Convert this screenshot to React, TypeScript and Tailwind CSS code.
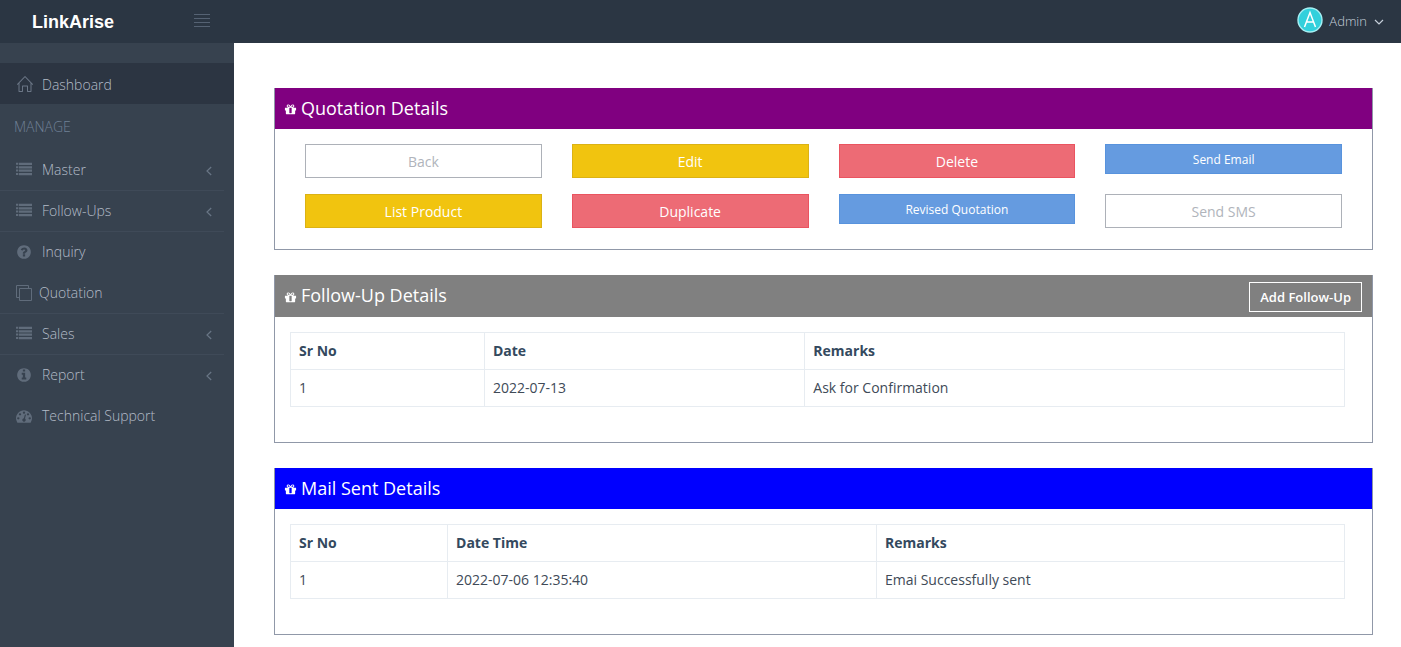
import type { ReactNode } from "react";
import { SlHome } from "react-icons/sl";

const DISC =
  "q0 209-103 385.5t-279.5 279.5-385.5 103-385.5-103-279.5-279.5-103-385.5 103-385.5 279.5-279.5 385.5-103 385.5 103 279.5 279.5 103 385.5z";
const DOT =
  "q0-53-37.5-90.5t-90.5-37.5-90.5 37.5-37.5 90.5 37.5 90.5 90.5 37.5 90.5-37.5 37.5-90.5z";

const PATHS = {
  gift: "M1056 1356v-716h-320v716q0 25 18 38.5t46 13.5h192q28 0 46-13.5t18-38.5zm-456-844h195l-126-161q-26-31-69-31-40 0-68 28t-28 68 28 68 68 28zm688-96q0-40-28-68t-68-28q-43 0-69 31l-125 161h194q40 0 68-28t28-68zm376 256v320q0 14-9 23t-23 9h-96v416q0 40-28 68t-68 28h-1088q-40 0-68-28t-28-68v-416h-96q-14 0-23-9t-9-23v-320q0-14 9-23t23-9h440q-93 0-158.5-65.5t-65.5-158.5 65.5-158.5 158.5-65.5q107 0 168 77l128 165 128-165q61-77 168-77 93 0 158.5 65.5t65.5 158.5-65.5 158.5-158.5 65.5h440q14 0 23 9t9 23z",
  list: "M0 1232h256v224H0zM0 848h256v224H0zM0 464h256v224H0zM0 80h256v224H0zM336 1232h1456v256H336zM336 848h1456v256H336zM336 464h1456v256H336zM336 80h1456v256H336z",
  question:
    "M1024 1376v-192q0-14-9-23t-23-9h-192q-14 0-23 9t-9 23v192q0 14 9 23t23 9h192q14 0 23-9t9-23zm256-672q0-88-55.5-163t-138.5-116-170-41q-243 0-371 213-15 24 8 42l132 100q7 6 19 6 16 0 25-12 53-68 86-92 34-24 86-24 48 0 85.5 26t37.5 59q0 38-20 61t-68 45q-63 28-115.5 86.5t-52.5 125.5v36q0 14 9 23t23 9h192q14 0 23-9t9-23q0-19 21.5-49.5t54.5-49.5q32-18 49-28.5t46-35 44.5-48 28-60.5 12.5-81zm384 192" +
    DISC,
  info:
    "M1152 1376v-160q0-14-9-23t-23-9h-96v-512q0-14-9-23t-23-9h-320q-14 0-23 9t-9 23v160q0 14 9 23t23 9h96v320h-96q-14 0-23 9t-9 23v160q0 14 9 23t23 9h448q14 0 23-9t9-23zm-128-896v-160q0-14-9-23t-23-9h-192q-14 0-23 9t-9 23v160q0 14 9 23t23 9h192q14 0 23-9t9-23zm640 416" +
    DISC,
  gauge:
    "M384 1152" + DOT + "m192-448" + DOT +
    "m428 481l101-382q6-26-7.5-48.5t-38.5-29.5-48 6.5-30 39.5l-101 382q-60 5-107 43.5t-63 98.5q-20 77 20 146t117 89 146-20 89-117q16-60-6-117t-72-91zm660-33" +
    DOT + "m-640-640" + DOT + "m448 192" + DOT +
    "m320 448q0 261-141 483-19 29-54 29h-1402q-35 0-54-29-141-221-141-483 0-182 71-348t191-286 286-191 348-71 348 71 286 191 191 286 71 348z",
};

function Glyph({ name, className }: { name: keyof typeof PATHS; className: string }) {
  return (
    <svg viewBox="0 0 1792 1792" fill="currentColor" aria-hidden="true" className={className}>
      <path d={PATHS[name]} />
    </svg>
  );
}

function Layers() {
  return (
    <svg viewBox="0 0 16 16" fill="none" stroke="currentColor" aria-hidden="true" className="size-4 shrink-0">
      <path d="M3.5 3.5h12v12h-12zM3 12.5H.5V.5h12V3" />
    </svg>
  );
}

type Item = { label: string; icon: ReactNode; sub?: boolean; line?: boolean; tight?: boolean };

const listIcon = <Glyph name="list" className="size-4 shrink-0" />;

const items: Item[] = [
  { label: "Master", icon: listIcon, sub: true, line: true },
  { label: "Follow-Ups", icon: listIcon, sub: true, line: true },
  { label: "Inquiry", icon: <Glyph name="question" className="size-4 shrink-0" /> },
  { label: "Quotation", icon: <Layers />, line: true, tight: true },
  { label: "Sales", icon: listIcon, sub: true, line: true },
  { label: "Report", icon: <Glyph name="info" className="size-4 shrink-0" />, sub: true },
  { label: "Technical Support", icon: <Glyph name="gauge" className="size-4 shrink-0" /> },
];

function Sidebar() {
  return (
    <nav className="w-[234px] shrink-0 bg-[#37424f] pt-5 text-sm font-light text-[#b4bcc8]">
      <a href="#dashboard" className="flex h-[41px] items-center gap-[9px] bg-[#2c3542] pt-[2px] pl-[17px]">
        <SlHome className="mb-px size-4 shrink-0 text-[#6b7686]" />
        Dashboard
      </a>
      <h3 className="flex h-[46px] items-center pl-[14px] text-[#708096]">MANAGE</h3>
      <ul>
        {items.map((item) => (
          <li key={item.label} className="pr-[10px]">
            <a
              href="#menu"
              className={
                "flex h-[41px] items-center border-b pl-4 " +
                (item.line ? "border-[#3f4a58] " : "border-transparent ") +
                (item.tight ? "gap-[7px]" : "gap-[10px]")
              }
            >
              <span className="pb-px text-[#606c7b]">{item.icon}</span>
              {item.label}
              {item.sub && (
                <svg viewBox="0 0 6 10" fill="none" stroke="currentColor" aria-hidden="true" className="mt-px mr-3 ml-auto h-[10px] w-[6px] text-[#697686]">
                  <path d="M5.2 1 1 5l4.2 4" strokeWidth="1.2" />
                </svg>
              )}
            </a>
          </li>
        ))}
      </ul>
    </nav>
  );
}

function Panel({ title, head, action, children }: { title: string; head: string; action?: ReactNode; children: ReactNode }) {
  return (
    <section className="mb-[25px] border border-t-0 border-[#9098a8]">
      <header className={"flex min-h-[41px] items-center pr-[10px] pl-[9px] text-white " + head}>
        <div className="flex items-center pb-[2px]">
          <Glyph name="gift" className="mt-1 mr-1 size-[13px]" />
          <h2 className="text-lg leading-6">{title}</h2>
        </div>
        {action}
      </header>
      {children}
    </section>
  );
}

function DataTable({ head, row, cols }: { head: string[]; row: string[]; cols: string[] }) {
  return (
    <div className="pt-[15px] pr-[27px] pb-[35px] pl-[15px]">
      <table className="w-full table-fixed border-collapse text-left text-sm leading-5 text-[#34495e]">
        <thead>
          <tr>
            {head.map((h, i) => (
              <th key={h} className={"border border-[#e7ecf1] p-2 font-bold " + cols[i]}>{h}</th>
            ))}
          </tr>
        </thead>
        <tbody>
          <tr>
            {row.map((c) => (
              <td key={c} className="border border-[#e7ecf1] p-2 text-[#404a57]">{c}</td>
            ))}
          </tr>
        </tbody>
      </table>
    </div>
  );
}

const plain = "h-[34px] border-[#adb1b8] bg-white text-sm text-[#b0b4bb]";
const yellow = "h-[34px] border-[#dbb215] bg-[#f1c40f] text-sm text-white";
const red = "h-[34px] border-[#ea5460] bg-[#ed6b75] text-sm text-white";
const blue = "h-[30px] border-[#5893dd] bg-[#659be0] text-xs text-white";

const actions = [
  ["Back", plain],
  ["Edit", yellow],
  ["Delete", red],
  ["Send Email", blue],
  ["List Product", yellow],
  ["Duplicate", red],
  ["Revised Quotation", blue],
  ["Send SMS", plain],
];

export default function App() {
  return (
    <div className="flex min-h-screen flex-col bg-white font-['Open_Sans',sans-serif]">
      <header className="flex h-[43px] items-center bg-[#2b3643]">
        <div className="flex w-[234px] items-center justify-between pr-6 pl-8">
          <a href="#home" className="pt-px font-['Liberation_Sans',sans-serif] text-lg leading-6 font-bold text-white">LinkArise</a>
          <button type="button" aria-label="Toggle menu" className="pb-[2px] text-[#556273]">
            <svg viewBox="0 0 16 13" stroke="currentColor" aria-hidden="true" className="h-[13px] w-4">
              <path d="M0 .5h16M0 4.5h16M0 8.5h16M0 12.5h16" />
            </svg>
          </button>
        </div>
        <button type="button" className="mr-[17px] ml-auto flex items-center pt-px text-[13px] font-light text-[#c6cfda]">
          <svg viewBox="0 0 26 26" aria-hidden="true" className="mr-[6px] mb-[5px] size-[26px]">
            <circle cx="13" cy="13" r="12" fill="#32d0dc" stroke="#a5eff3" strokeWidth="1.4" />
            <path d="M7.5 20 13 5.5 18.5 20M9.5 15h7" fill="none" stroke="#fff" strokeWidth="1.5" />
          </svg>
          Admin
          <svg viewBox="0 0 10 6" fill="none" stroke="currentColor" aria-hidden="true" className="ml-[7px] h-[6px] w-[10px]">
            <path d="m1 1 4 4 4-4" strokeWidth="1.2" />
          </svg>
        </button>
      </header>
      <div className="flex flex-1">
        <Sidebar />
        <main className="min-w-0 flex-1 pt-[45px] pr-7 pl-10">
          <Panel title="Quotation Details" head="bg-[#800080]">
            <div className="grid grid-cols-4 items-start gap-x-[30px] gap-y-4 px-[30px] pt-[15px] pb-[21px]">
              {actions.map(([label, style]) => (
                <button key={label} type="button" className={"border pt-[2px] " + style}>{label}</button>
              ))}
            </div>
          </Panel>
          <Panel
            title="Follow-Up Details"
            head="bg-[#808080]"
            action={
              <button type="button" className="mt-[7px] mb-[5px] ml-auto h-[30px] border border-white px-[10px] pt-[2px] text-[13px] font-semibold">
                Add Follow-Up
              </button>
            }
          >
            <DataTable
              head={["Sr No", "Date", "Remarks"]}
              row={["1", "2022-07-13", "Ask for Confirmation"]}
              cols={["w-[18.4%]", "w-[30.4%]", "w-[51.2%]"]}
            />
          </Panel>
          <Panel title="Mail Sent Details" head="bg-[#0000ff]">
            <DataTable
              head={["Sr No", "Date Time", "Remarks"]}
              row={["1", "2022-07-06 12:35:40", "Emai Successfully sent"]}
              cols={["w-[14.9%]", "w-[40.7%]", "w-[44.4%]"]}
            />
          </Panel>
        </main>
      </div>
    </div>
  );
}
